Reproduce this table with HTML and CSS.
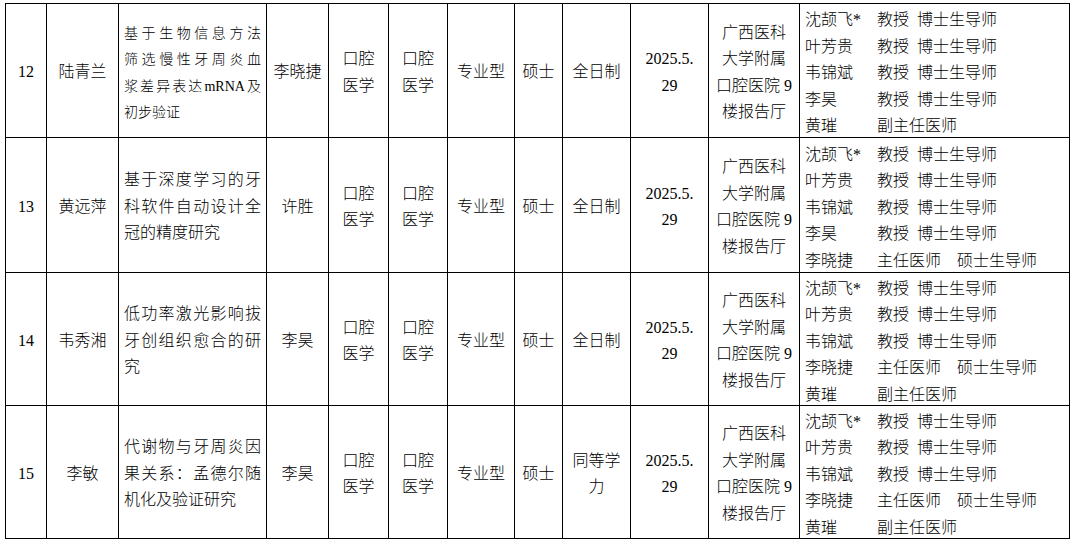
FILE: index.html
```html
<!DOCTYPE html>
<html lang="zh-CN">
<head>
<meta charset="utf-8">
<title>答辩安排</title>
<link rel="stylesheet" href="styles.css">
</head>
<body>
<div class="sheet">
  <!-- row 12 -->
  <div class="c">12</div>
  <div class="c">陆青兰</div>
  <div class="c title small">
    <div class="tt">
      <div class="jl">基于生物信息方法</div>
      <div class="jl">筛选慢性牙周炎血</div>
      <div class="jl">浆差异表达mRNA及</div>
      <div>初步验证</div>
    </div>
  </div>
  <div class="c">李晓捷</div>
  <div class="c">口腔<br>医学</div>
  <div class="c">口腔<br>医学</div>
  <div class="c">专业型</div>
  <div class="c">硕士</div>
  <div class="c">全日制</div>
  <div class="c">2025.5.<br>29</div>
  <div class="c">广西医科<br>大学附属<br>口腔医院 9<br>楼报告厅</div>
  <div class="c committee">
    <div class="m"><span class="n">沈颉飞*</span><span>教授</span><span class="d">博士生导师</span></div>
    <div class="m"><span class="n">叶芳贵</span><span>教授</span><span class="d">博士生导师</span></div>
    <div class="m"><span class="n">韦锦斌</span><span>教授</span><span class="d">博士生导师</span></div>
    <div class="m"><span class="n">李昊</span><span>教授</span><span class="d">博士生导师</span></div>
    <div class="m"><span class="n">黄璀</span><span>副主任医师</span></div>
  </div>

  <!-- row 13 -->
  <div class="c">13</div>
  <div class="c">黄远萍</div>
  <div class="c title">
    <div class="tt">
      <div class="jl">基于深度学习的牙</div>
      <div class="jl">科软件自动设计全</div>
      <div>冠的精度研究</div>
    </div>
  </div>
  <div class="c">许胜</div>
  <div class="c">口腔<br>医学</div>
  <div class="c">口腔<br>医学</div>
  <div class="c">专业型</div>
  <div class="c">硕士</div>
  <div class="c">全日制</div>
  <div class="c">2025.5.<br>29</div>
  <div class="c">广西医科<br>大学附属<br>口腔医院 9<br>楼报告厅</div>
  <div class="c committee">
    <div class="m"><span class="n">沈颉飞*</span><span>教授</span><span class="d">博士生导师</span></div>
    <div class="m"><span class="n">叶芳贵</span><span>教授</span><span class="d">博士生导师</span></div>
    <div class="m"><span class="n">韦锦斌</span><span>教授</span><span class="d">博士生导师</span></div>
    <div class="m"><span class="n">李昊</span><span>教授</span><span class="d">博士生导师</span></div>
    <div class="m"><span class="n">李晓捷</span><span>主任医师</span><span class="d2">硕士生导师</span></div>
  </div>

  <!-- row 14 -->
  <div class="c">14</div>
  <div class="c">韦秀湘</div>
  <div class="c title">
    <div class="tt">
      <div class="jl">低功率激光影响拔</div>
      <div class="jl">牙创组织愈合的研</div>
      <div>究</div>
    </div>
  </div>
  <div class="c">李昊</div>
  <div class="c">口腔<br>医学</div>
  <div class="c">口腔<br>医学</div>
  <div class="c">专业型</div>
  <div class="c">硕士</div>
  <div class="c">全日制</div>
  <div class="c">2025.5.<br>29</div>
  <div class="c">广西医科<br>大学附属<br>口腔医院 9<br>楼报告厅</div>
  <div class="c committee">
    <div class="m"><span class="n">沈颉飞*</span><span>教授</span><span class="d">博士生导师</span></div>
    <div class="m"><span class="n">叶芳贵</span><span>教授</span><span class="d">博士生导师</span></div>
    <div class="m"><span class="n">韦锦斌</span><span>教授</span><span class="d">博士生导师</span></div>
    <div class="m"><span class="n">李晓捷</span><span>主任医师</span><span class="d2">硕士生导师</span></div>
    <div class="m"><span class="n">黄璀</span><span>副主任医师</span></div>
  </div>

  <!-- row 15 -->
  <div class="c">15</div>
  <div class="c">李敏</div>
  <div class="c title">
    <div class="tt">
      <div class="jl">代谢物与牙周炎因</div>
      <div class="jl">果关系：孟德尔随</div>
      <div>机化及验证研究</div>
    </div>
  </div>
  <div class="c">李昊</div>
  <div class="c">口腔<br>医学</div>
  <div class="c">口腔<br>医学</div>
  <div class="c">专业型</div>
  <div class="c">硕士</div>
  <div class="c">同等学<br>力</div>
  <div class="c">2025.5.<br>29</div>
  <div class="c">广西医科<br>大学附属<br>口腔医院 9<br>楼报告厅</div>
  <div class="c committee">
    <div class="m"><span class="n">沈颉飞*</span><span>教授</span><span class="d">博士生导师</span></div>
    <div class="m"><span class="n">叶芳贵</span><span>教授</span><span class="d">博士生导师</span></div>
    <div class="m"><span class="n">韦锦斌</span><span>教授</span><span class="d">博士生导师</span></div>
    <div class="m"><span class="n">李晓捷</span><span>主任医师</span><span class="d2">硕士生导师</span></div>
    <div class="m"><span class="n">黄璀</span><span>副主任医师</span></div>
  </div>
</div>
</body>
</html>
```

FILE: styles.css
```css
html, body {
  margin: 0;
  padding: 0;
  background: #ffffff;
}

body {
  font-family: "Liberation Serif", "Noto Sans CJK SC", serif;
  font-size: 16px;
  font-weight: 300;
  color: #000000;
}

.sheet {
  margin: 3px 0 0 5px;
  width: 1065px;
  display: grid;
  grid-template-columns: 40px 71px 147px 61px 59px 58px 66px 47px 67px 77px 90px 269px;
  grid-template-rows: 133px 134px 132px 132px;
  gap: 1px;
  padding: 1px;
  box-sizing: border-box;
  background: #000000;
}

.c {
  background: #ffffff;
  display: flex;
  align-items: center;
  justify-content: center;
  text-align: center;
  line-height: 26.5px;
  padding-top: 4px;
  box-sizing: border-box;
  overflow: hidden;
  white-space: nowrap;
}

.title {
  justify-content: flex-start;
  text-align: left;
  padding-left: 5px;
  padding-right: 5px;
}

.title.small {
  font-size: 14px;
  padding-top: 6px;
}

.tt {
  width: 100%;
}

.jl {
  text-align: justify;
  text-align-last: justify;
}

.committee {
  flex-direction: column;
  align-items: stretch;
  justify-content: center;
  text-align: left;
  padding-left: 5px;
  padding-top: 6px;
}

.m {
  display: flex;
}

.n {
  width: 72px;
  flex: none;
}

.d {
  margin-left: 8px;
}

.d2 {
  margin-left: 16px;
}
```
